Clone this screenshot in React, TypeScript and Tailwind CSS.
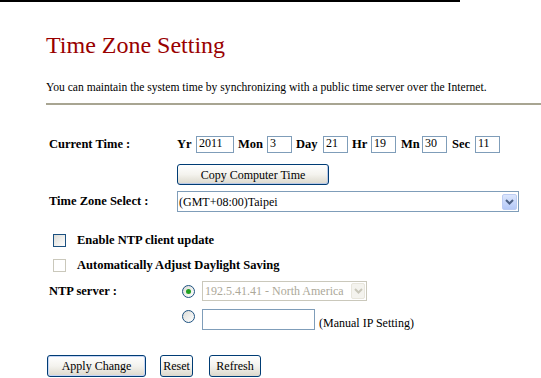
import React from "react";

const field = "h-[17px] w-[25px] border border-[#7f9db9] bg-white pl-[2px] text-[12px] leading-[13px]";
const xpButton =
  "flex items-center justify-center rounded-[3px] border border-[#003c74] bg-linear-to-b from-white via-[#f4f3ee] to-[#dcd8cc] text-[12px] text-black";

function Chevron({ color }: { color: string }) {
  return (
    <svg width="9" height="6" viewBox="0 0 9 6">
      <path d="M1 1 L4.5 4.5 L8 1" fill="none" stroke={color} strokeWidth="2" />
    </svg>
  );
}

function Radio({ checked }: { checked?: boolean }) {
  return (
    <div className="flex h-[13px] w-[13px] items-center justify-center rounded-full border border-[#1c5180] bg-linear-to-br from-[#dcdcd7] to-white">
      {checked && <div className="h-[5px] w-[5px] rounded-full bg-[#21a121]" />}
    </div>
  );
}

function TimeField({ label, value, labelW, fieldW = "w-[25px]", gap = "ml-[4px]" }: { label: string; value: string; labelW: string; fieldW?: string; gap?: string }) {
  return (
    <div className={`flex items-center ${gap}`}>
      <span className={`${labelW} text-[12.5px] font-bold`}>{label}</span>
      <div className={`${field} ${fieldW}`}>{value}</div>
    </div>
  );
}

export default function App() {
  return (
    <div className="h-[378px] w-[541px] overflow-hidden bg-white font-['Liberation_Serif',serif] text-black">
      <div className="h-[2px] w-[460px] bg-black" />
      <div className="pl-[46px]">
        <h1 className="mt-[29px] text-[24px] leading-[28px] text-[#990000]">Time Zone Setting</h1>
        <p className="mt-[22px] text-[11.6px] leading-[14px]">
          You can maintain the system time by synchronizing with a public time server over the Internet.
        </p>
        <div className="mt-[8px] h-[2px] bg-[#a8a592]" />

        <div className="pl-[3px]">
          <div className="mt-[31px] flex h-[17px] items-center">
            <span className="w-[128px] text-[12.5px] font-bold">Current Time :</span>
            <TimeField label="Yr" value="2011" labelW="w-[19px]" fieldW="w-[38px]" gap="ml-0" />
            <TimeField label="Mon" value="3" labelW="w-[29px]" />
            <TimeField label="Day" value="21" labelW="w-[27px]" />
            <TimeField label="Hr" value="19" labelW="w-[19px]" />
            <TimeField label="Mn" value="30" labelW="w-[21px]" gap="ml-[5px]" />
            <TimeField label="Sec" value="11" labelW="w-[23px]" gap="ml-[5px]" />
          </div>

          <div className="mt-[11px] flex">
            <div className="w-[128px]" />
            <button className={`${xpButton} h-[21px] w-[152px] shadow-[inset_-1px_-1px_0_#b9c8e6]`}>Copy Computer Time</button>
          </div>

          <div className="mt-[6px] flex h-[21px] items-center">
            <span className="w-[128px] text-[12.5px] font-bold">Time Zone Select :</span>
            <div className="flex h-[21px] w-[342px] items-center justify-between border border-[#7f9db9] bg-white pl-[1px] pr-[1px] text-[12px]">
              <span>(GMT+08:00)Taipei</span>
              <div className="flex h-[16px] w-[15px] items-center justify-center rounded-[2px] border border-[#bcccf2] bg-linear-to-b from-[#dbe6fd] to-[#b5c9f7]">
                <Chevron color="#4d6185" />
              </div>
            </div>
          </div>

          <div className="mt-[22px] flex h-[13px] items-center pl-[4px]">
            <div className="h-[13px] w-[13px] border border-[#1c5180] bg-linear-to-br from-[#dcdcd7] to-white" />
            <span className="ml-[11px] text-[12.5px] font-bold">Enable NTP client update</span>
          </div>
          <div className="mt-[12px] flex h-[13px] items-center pl-[4px]">
            <div className="h-[13px] w-[13px] border border-[#cac8bb] bg-white" />
            <span className="ml-[11px] text-[12.5px] font-bold">Automatically Adjust Daylight Saving</span>
          </div>

          <div className="mt-[9px] flex h-[20px] items-center">
            <span className="w-[128px] text-[12.5px] font-bold">NTP server :</span>
            <div className="ml-[5px]">
              <Radio checked />
            </div>
            <div className="ml-[7px] flex h-[20px] w-[165px] items-center justify-between border border-[#cac8bb] bg-white pl-[2px] pr-[1px] text-[12px] text-[#aca899]">
              <span>192.5.41.41 - North America</span>
              <div className="flex h-[16px] w-[14px] items-center justify-center rounded-[2px] border border-[#e8e6dc] bg-[#f4f3ee]">
                <Chevron color="#c9c7ba" />
              </div>
            </div>
          </div>

          <div className="mt-[8px] flex h-[21px]">
            <div className="w-[128px]" />
            <div className="ml-[5px] mt-[1px]">
              <Radio />
            </div>
            <div className="ml-[7px] h-[21px] w-[113px] border border-[#7f9db9] bg-white" />
            <span className="ml-[4px] self-end text-[12px] leading-[14px]">(Manual IP Setting)</span>
          </div>
        </div>

        <div className="mt-[25px] flex pl-[1px]">
          <button className={`${xpButton} h-[22px] w-[99px] shadow-[inset_0_0_0_1px_#c5d5f5]`}>Apply Change</button>
          <button className={`${xpButton} ml-[14px] h-[22px] w-[33px]`}>Reset</button>
          <button className={`${xpButton} ml-[16px] h-[22px] w-[52px]`}>Refresh</button>
        </div>
      </div>
    </div>
  );
}
